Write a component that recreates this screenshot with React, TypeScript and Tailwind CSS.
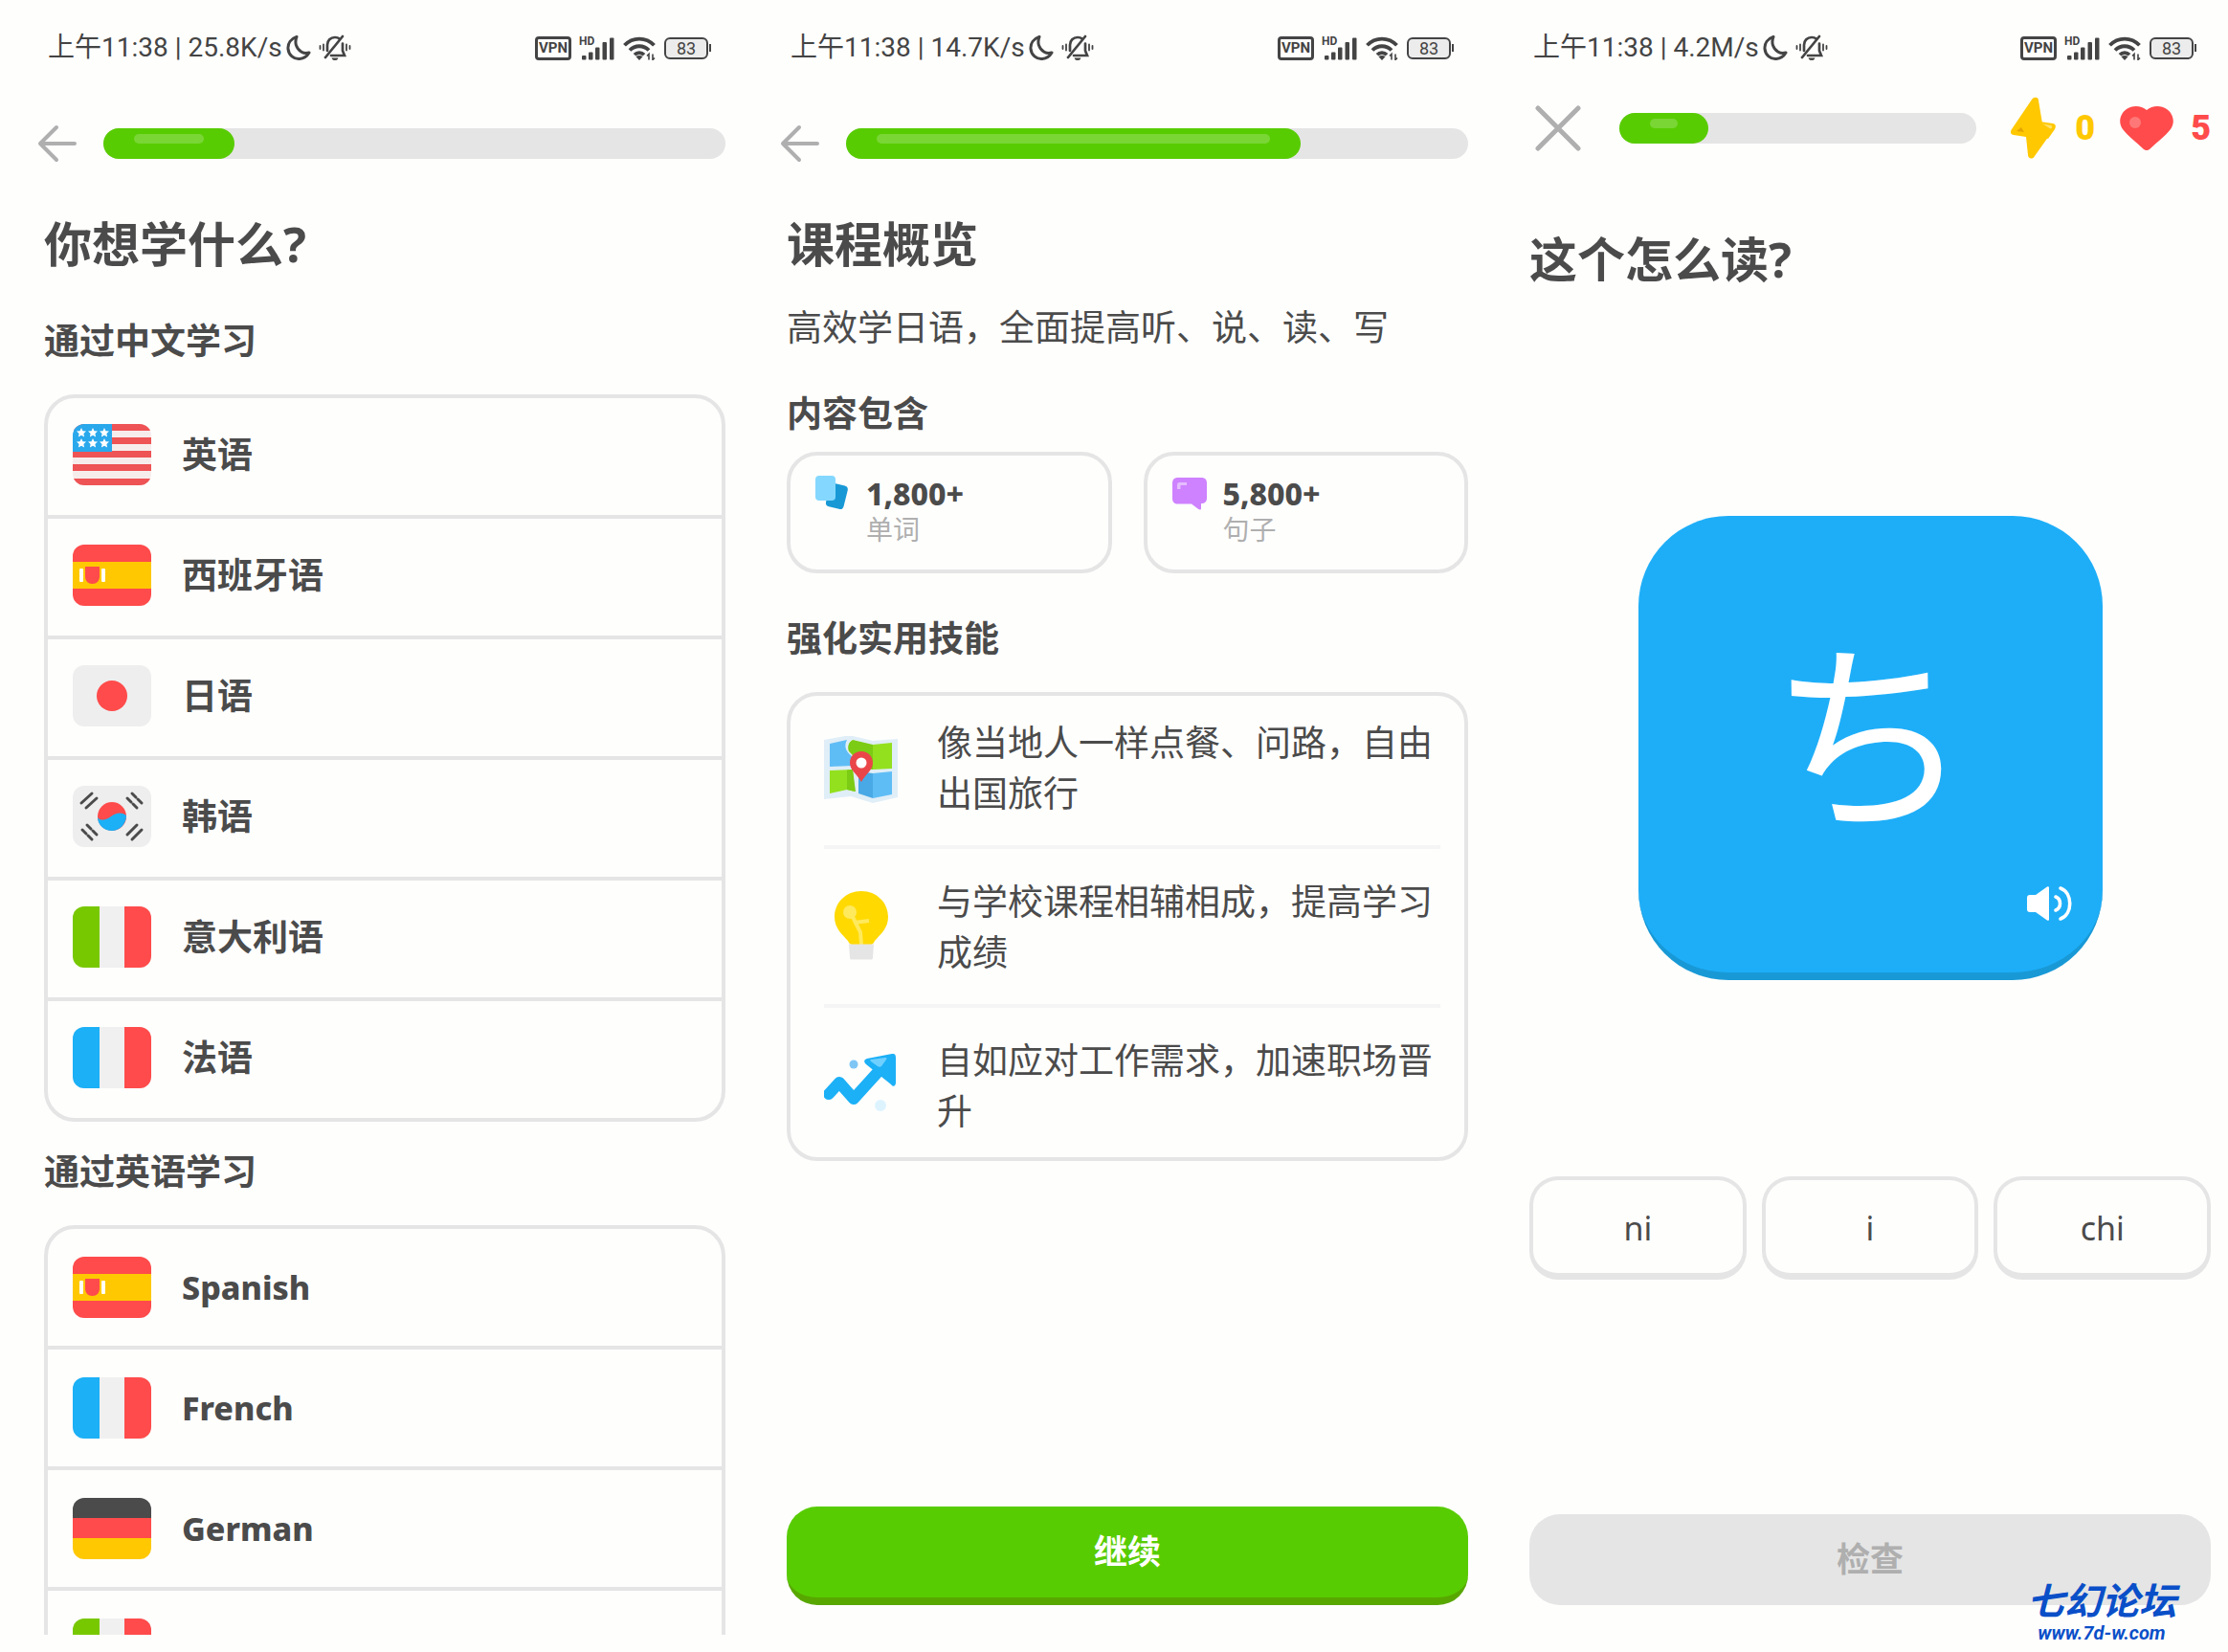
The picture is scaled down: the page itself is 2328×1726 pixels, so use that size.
import type { ReactNode } from 'react';
import clsx from 'clsx';

interface Language {
  flag: string;
  label?: string;
}

const languagesInChinese: Language[] = [
  { flag: 'us', label: '英语' },
  { flag: 'es', label: '西班牙语' },
  { flag: 'jp', label: '日语' },
  { flag: 'kr', label: '韩语' },
  { flag: 'it', label: '意大利语' },
  { flag: 'fr', label: '法语' },
];

const languagesInEnglish: Language[] = [
  { flag: 'es', label: 'Spanish' },
  { flag: 'fr', label: 'French' },
  { flag: 'de', label: 'German' },
  { flag: 'it' },
];

function Star({ x, y }: { x: number; y: number }) {
  return (
    <path
      transform={`translate(${x} ${y})`}
      d="M0 -5 L1.5 -1.7 L5 -1.4 L2.4 1 L3.1 4.6 L0 2.8 L-3.1 4.6 L-2.4 1 L-5 -1.4 L-1.5 -1.7 Z"
      fill="#fff"
    />
  );
}

function FlagArt({ code }: { code: string }) {
  switch (code) {
    case 'us':
      return (
        <>
          <rect width="82" height="64" fill="#f7ecec" />
          {[0, 14, 28, 42, 57].map((y) => (
            <rect key={y} y={y} width="82" height="7" fill="#ee5355" />
          ))}
          <rect width="41" height="29" fill="#2aa8ec" />
          {[9, 21, 33].map((x) => (
            <g key={x}>
              <Star x={x} y={9} />
              <Star x={x} y={20} />
            </g>
          ))}
        </>
      );
    case 'es':
      return (
        <>
          <rect width="82" height="64" fill="#ff4b4b" />
          <rect y="18" width="82" height="28" fill="#ffc800" />
          <rect x="7" y="25" width="4" height="14" rx="1" fill="#fff" />
          <rect x="30" y="25" width="4" height="14" rx="1" fill="#fff" />
          <path d="M13 23h15v10c0 5-3 8-7.500 8s-7.500-3-7.500-8z" fill="#ff4b4b" />
        </>
      );
    case 'jp':
      return (
        <>
          <rect width="82" height="64" fill="#eeeeee" />
          <circle cx="41" cy="32" r="16" fill="#ff4b4b" />
        </>
      );
    case 'kr':
      return (
        <>
          <rect width="82" height="64" fill="#eeeeee" />
          <circle cx="41" cy="32" r="15" fill="#ff4b4b" />
          <path d="M26 33c3 4 9 3 14-1s11-5 16-1c0 9-7 16-15 16s-15-6-15-14z" fill="#1cb0f6" />
          <g stroke="#4b4b4b" strokeWidth="3" strokeLinecap="round">
            <path d="M9 18 20 8M14 23 25 13" />
            <path d="M62 8 66 12M68 14 72 18M57 13 61 17M63 19 67 23" />
            <path d="M10 46 14 50M16 52 20 56M15 41 19 45M21 47 25 51" />
            <path d="M57 51 67 41M62 56 72 46" />
          </g>
        </>
      );
    case 'de':
      return (
        <>
          <rect width="82" height="22" fill="#4b4b4b" />
          <rect y="21" width="82" height="22" fill="#ff4b4b" />
          <rect y="42" width="82" height="22" fill="#ffc800" />
        </>
      );
    default:
      return (
        <>
          <rect width="82" height="64" fill="#f0f0f0" />
          <rect width="28" height="64" fill={code === 'it' ? '#78c800' : '#1cb0f6'} />
          <rect x="54" width="28" height="64" fill="#ff4b4b" />
        </>
      );
  }
}

function Flag({ code }: { code: string }) {
  return (
    <svg viewBox="0 0 82 64" className="h-16 w-[82px] shrink-0 rounded-xl" aria-hidden="true">
      <FlagArt code={code} />
    </svg>
  );
}

function MoonIcon() {
  return (
    <svg viewBox="0 0 26 27" className="h-7 w-[26px]" fill="none" stroke="#444" strokeWidth="3" strokeLinejoin="round">
      <path d="M11 2C5 4 1.500 9 2 14.500 2.600 21 8 25.500 14 25c4.500-.4 8-3 10-6.500-2.500.8-5.500.7-8-.8C10.500 14.500 8.500 8 11 2z" />
    </svg>
  );
}

function MutedBellIcon() {
  return (
    <svg viewBox="0 0 34 28" className="h-7 w-[34px]" fill="none" stroke="#444" strokeWidth="2.700" strokeLinecap="round">
      <path d="M9 17V11c0-4.500 3.300-8 8-8 2 0 3.500.5 4.700 1.500M25 9.500V17l2 5H13" />
      <path d="M25 2 7 24" />
      <path d="M5 10.500v6M1.500 12v3M29 10.500v6M32.500 12v3" strokeWidth="1.800" />
      <path d="M14.500 25.200h5c-.6 1.500-4.400 1.500-5 0z" fill="#444" strokeWidth="1.200" />
    </svg>
  );
}

function SignalIcon() {
  return (
    <svg viewBox="0 0 36 25" className="h-[25px] w-9 overflow-visible" fill="#444">
      <text x="-1" y="9" fontSize="12" fontWeight="700" fontFamily="Roboto, sans-serif">
        HD
      </text>
      <rect x="2" y="20" width="4.500" height="4.500" rx="1" />
      <rect x="9" y="16.500" width="4.500" height="8" rx="1" />
      <rect x="16" y="11.500" width="4.500" height="13" rx="1" />
      <rect x="23.500" y="6" width="4.500" height="18.500" rx="1" />
      <rect x="31" y="1.500" width="4.500" height="23" rx="1" />
    </svg>
  );
}

function WifiIcon() {
  return (
    <svg viewBox="0 0 34 25" className="h-[25px] w-[34px]" fill="none" stroke="#444" strokeWidth="3.800">
      <path d="M1.500 9.300C10 .3 24 .3 32.500 9.300M7 14.500c5.500-5.700 14.500-5.700 20 0M12 19.300c2.700-2.800 7.300-2.800 10 0" />
      <path d="M17 25l-3.500-3.700c2-1.700 5-1.700 7 0z" fill="#444" stroke="none" />
      <path d="M27 24.500v-6l-2 2M31 18.500v6l2-2" strokeWidth="1.600" />
    </svg>
  );
}

function StatusBar({ speed }: { speed: string }) {
  return (
    <div className="flex h-[100px] items-center justify-between pr-[15px] pl-1 text-[#444]">
      <div className="flex items-center font-[Roboto,'Noto_Sans_CJK_SC',sans-serif] text-[28px] leading-8">
        <span className="whitespace-pre">上午11:38 | {speed}</span>
        <span className="ml-1 flex gap-2">
          <MoonIcon />
          <MutedBellIcon />
        </span>
      </div>
      <div className="flex items-center gap-[9px]">
        <span className="flex h-[25px] w-[38px] items-center justify-center rounded border-[3px] border-[#444] font-[Roboto,sans-serif] text-[15px] font-bold">
          VPN
        </span>
        <SignalIcon />
        <WifiIcon />
        <span className="flex items-center gap-px">
          <span className="flex h-[23px] w-[46px] items-center justify-center rounded-md border-2 border-[#444] bg-[#ececec] font-[Roboto,sans-serif] text-[18px]">
            83
          </span>
          <span className="h-2 w-0.5 bg-[#444]" />
        </span>
      </div>
    </div>
  );
}

function ProgressBar({ percent }: { percent: number }) {
  return (
    <div
      role="progressbar"
      aria-valuenow={percent}
      aria-valuemin={0}
      aria-valuemax={100}
      className="h-8 flex-1 rounded-full bg-[#e5e5e5]"
    >
      <div className="h-full rounded-full bg-[#58cc02] px-8 pt-1.5" style={{ width: `${percent}%` }}>
        <div className="h-2.5 rounded-full bg-[#79d635]" />
      </div>
    </div>
  );
}

function BackHeader({ percent }: { percent: number }) {
  return (
    <header className="flex h-[100px] items-center">
      <button type="button" aria-label="返回" className="-ml-2 w-[70px]">
        <svg viewBox="0 0 44 40" className="h-10 w-11" fill="none" stroke="#afafaf" strokeWidth="4" strokeLinecap="round" strokeLinejoin="round">
          <path d="M40 20H4M21 3 4 20l17 17" />
        </svg>
      </button>
      <ProgressBar percent={percent} />
    </header>
  );
}

function SectionTitle({ children, className }: { children: ReactNode; className?: string }) {
  return <h2 className={clsx('text-[37px] leading-[48px] font-bold', className)}>{children}</h2>;
}

function LanguageList({ items, latin }: { items: Language[]; latin?: boolean }) {
  return (
    <ul className="shrink-0 divide-y-4 divide-[#e5e5e5] rounded-[32px] border-4 border-[#e5e5e5]">
      {items.map((item) => (
        <li key={item.flag}>
          <button
            type="button"
            aria-label={item.label ?? item.flag}
            className={clsx(
              'flex h-[122px] w-full items-center gap-8 px-[26px] text-left leading-[48px]',
              latin ? 'text-[34px] font-extrabold' : 'pb-1 text-[37px] font-bold'
            )}
          >
            <Flag code={item.flag} />
            {item.label}
          </button>
        </li>
      ))}
    </ul>
  );
}

function LanguageScreen() {
  return (
    <section className="flex h-screen flex-col pr-[18px] pl-[46px]">
      <StatusBar speed="25.8K/s" />
      <BackHeader percent={21} />
      <h1 className="mt-5 text-[50px] leading-[70px] font-bold">你想学什么?</h1>
      <div className="mb-[18px] flex min-h-0 flex-1 flex-col overflow-hidden">
        <SectionTitle className="mt-[42px]">通过中文学习</SectionTitle>
        <div className="mt-8">
          <LanguageList items={languagesInChinese} />
        </div>
        <SectionTitle className="mt-7">通过英语学习</SectionTitle>
        <div className="mt-8">
          <LanguageList items={languagesInEnglish} latin />
        </div>
      </div>
    </section>
  );
}

function CardsIcon() {
  return (
    <svg viewBox="0 0 36 36" className="h-9 w-9 shrink-0">
      <rect x="13" y="9" width="19" height="25" rx="4" transform="rotate(14 23 21)" fill="#1899d6" />
      <rect x="0" y="0" width="21" height="26" rx="4" fill="#84d8ff" />
    </svg>
  );
}

function BubbleIcon() {
  return (
    <svg viewBox="0 0 36 36" className="h-9 w-9 shrink-0">
      <path d="M6 2h24c4 0 6 2 6 6v15c0 4-2 6-6 6v5c0 2-1.500 2-3 .8L20 29.500H6c-4 0-6-2-6-6V8c0-4 2-6 6-6z" fill="#ce82ff" />
      <path d="M5 14V9.500C5 8 6 7 7.500 7H15v3H8.500v4z" fill="#e5bdff" />
    </svg>
  );
}

function StatCard({ icon, value, label }: { icon: ReactNode; value: string; label: string }) {
  return (
    <div className="flex h-[127px] flex-1 gap-[17px] rounded-[32px] border-4 border-[#e5e5e5] px-[26px] pt-[21px]">
      {icon}
      <div>
        <div className="text-[32px] leading-[38px] font-extrabold">{value}</div>
        <div className="text-[28px] leading-9 text-[#afafaf]">{label}</div>
      </div>
    </div>
  );
}

function MapIcon() {
  return (
    <svg viewBox="0 0 78 74" className="h-[74px] w-[78px]">
      <path d="M0 8 22 4 30 4 51 9 77 7V68L51 74 28 67 0 70z" fill="#e0eef7" />
      <path d="M6 12 24 8c-4 8 0 13 6 18v9L6 36z" fill="#5fbdf6" />
      <path d="M26 20c-2-5 0-10 4-12L51 13V39L34 37C34 28 30 24 26 20z" fill="#7ccb14" />
      <path d="M51 13 71 11V38L51 39z" fill="#93e01f" />
      <path d="M6 40 30 39 32 62 24 60 6 64z" fill="#93e01f" />
      <path d="M24 39.500 30 39 33 62 24 60z" fill="#7ccb14" />
      <path d="M36 41 51 43V69L36 64z" fill="#49a9e6" />
      <path d="M51 43 71 41V65L51 69z" fill="#5fbdf6" />
      <path d="M39 20c-7 0-12 5-12 12 0 8 8 12 12 20 4-8 12-12 12-20 0-7-5-12-12-12z" fill="#ea4649" />
      <circle cx="39" cy="32" r="5.500" fill="#fff" />
    </svg>
  );
}

function BulbIcon() {
  return (
    <svg viewBox="0 0 78 74" className="h-[74px] w-[78px]">
      <path d="M39 0C23 0 11 12 11 27c0 12 8 18 14 25 1 2 2 4 5 4h18c3 0 4-2 5-4 6-7 14-13 14-25C67 12 55 0 39 0z" fill="#ffd900" />
      <circle cx="27" cy="22" r="7" fill="#ffe95c" />
      <path d="M29 25 38 43 39 56M31 33 47 31" fill="none" stroke="#ffe95c" strokeWidth="4" />
      <path d="M26 55.500h26l-1 14c0 2-1 2-2 2H29c-1 0-2 0-2-2z" fill="#e5e5e5" />
    </svg>
  );
}

function TrendIcon() {
  return (
    <svg viewBox="0 0 78 74" className="h-[74px] w-[78px]">
      <path d="M5 46 16 34 31 51 60 19" fill="none" stroke="#1cb0f6" strokeWidth="12" strokeLinecap="round" strokeLinejoin="round" />
      <path d="M45 9 71 4c3-.6 4 1 4 4v26c0 4-3 5-5 2L44 15c-3-3-2-5 1-6z" fill="#1cb0f6" />
      <path d="M49 10 64 8c2 0 2 1 1 2l-5 7c-1 1-3 1-4 0l-7-5c-1-1-1-2 0-2z" fill="#6fd0ff" />
      <circle cx="31" cy="15" r="4.500" fill="#7fc6f5" />
      <circle cx="59" cy="58" r="6" fill="#ddf4ff" />
    </svg>
  );
}

const skills = [
  { icon: <MapIcon />, text: '像当地人一样点餐、问路，自由出国旅行' },
  { icon: <BulbIcon />, text: '与学校课程相辅相成，提高学习成绩' },
  { icon: <TrendIcon />, text: '自如应对工作需求，加速职场晋升' },
];

function OverviewScreen() {
  return (
    <section className="flex h-screen flex-col pr-[18px] pl-[46px]">
      <StatusBar speed="14.7K/s" />
      <BackHeader percent={73} />
      <h1 className="mt-5 text-[50px] leading-[70px] font-bold">课程概览</h1>
      <p className="mt-7 text-[37px] leading-[48px]">高效学日语，全面提高听、说、读、写</p>
      <SectionTitle className="mt-[42px]">内容包含</SectionTitle>
      <div className="mt-4 flex gap-[33px]">
        <StatCard icon={<CardsIcon />} value="1,800+" label="单词" />
        <StatCard icon={<BubbleIcon />} value="5,800+" label="句子" />
      </div>
      <SectionTitle className="mt-11">强化实用技能</SectionTitle>
      <ul className="mt-8 divide-y-4 divide-[#f5f5f5] rounded-[32px] border-4 border-[#e5e5e5] pr-[25px] pl-[35px]">
        {skills.map((skill) => (
          <li key={skill.text} className="flex items-center gap-10 py-7 first:pt-[22px] last:pb-[22px]">
            <span className="shrink-0">{skill.icon}</span>
            <p className="text-[37px] leading-[53px]">{skill.text}</p>
          </li>
        ))}
      </ul>
      <button
        type="button"
        className="mt-auto mb-[49px] h-[103px] rounded-[32px] border-b-8 border-[#58a700] bg-[#58cc02] text-[35px] font-bold text-white"
      >
        继续
      </button>
    </section>
  );
}

function BoltIcon() {
  return (
    <svg viewBox="0 0 48 66" className="h-[66px] w-12">
      <path d="M31 26 45 28c3 .5 3.500 3 2 6L40 44 30 40z" fill="#ffc800" />
      <path d="M32 28 43 30c1.500.3 1.500 2 .5 3L40 35z" fill="#ffe16b" />
      <path d="M23 3c2-3 7-3 7 1l4 24 9 6c1.500 1 1.500 2 .8 3L26 62c-2 4-7 3-7-1L17 42 4 40c-3-.5-4-3-2-6z" fill="#ffc800" />
      <path d="M7 36 12 32 15 37z" fill="#e5a500" />
    </svg>
  );
}

function HeartIcon() {
  return (
    <svg viewBox="0 0 56 46" className="h-[46px] w-14">
      <path d="M28 4C22-1 13-1 7 3c-7 5-9 14-4 21 6 8 14 13 22 21 2 1.500 4 1.500 6 0 8-8 16-13 22-21 5-7 3-16-4-21C43-1 34-1 28 4z" fill="#ff4b4b" />
      <circle cx="16" cy="17" r="6" fill="#ff7878" />
    </svg>
  );
}

function SpeakerIcon() {
  return (
    <svg viewBox="0 0 47 38" className="h-[38px] w-[47px]" fill="none" stroke="#fff" strokeWidth="3.600" strokeLinecap="round">
      <path d="M3 10h6L21 1.500c1.200-.8 2 0 2 1v33c0 1-.8 1.800-2 1L9 28H3c-2 0-3-1-3-3V13c0-2 1-3 3-3z" fill="#fff" stroke="none" />
      <path d="M30 12c6 2.500 6 11.500 0 14M35 3c13 5 13 27 0 32" />
    </svg>
  );
}

function LessonScreen() {
  return (
    <section className="relative flex h-screen flex-col pr-[18px] pl-[46px]">
      <StatusBar speed="4.2M/s" />
      <header className="flex h-[68px] items-center font-[Roboto,sans-serif] text-[36px] font-black">
        <button type="button" aria-label="关闭" className="w-[94px] pl-1.5">
          <svg viewBox="0 0 48 48" className="size-12" fill="none" stroke="#afafaf" strokeWidth="5" strokeLinecap="round">
            <path d="M3 3 45 45M45 3 3 45" />
          </svg>
        </button>
        <ProgressBar percent={25} />
        <div className="ml-[35px] flex items-center gap-5 text-[#ffc800]">
          <BoltIcon />
          0
        </div>
        <div className="ml-[26px] flex items-center gap-[18px] text-[#ff4b4b]">
          <HeartIcon />
          5
        </div>
      </header>
      <h1 className="mt-[68px] text-[50px] leading-[70px] font-bold">这个怎么读?</h1>
      <button
        type="button"
        aria-label="播放 ち"
        className="relative mt-[233px] flex size-[485px] items-center justify-center self-center rounded-[94px] border-b-8 border-[#1899d6] bg-[#1eaef8] pb-10 text-[212px] leading-none text-white"
      >
        <span lang="ja" className="font-['Noto_Sans_CJK_JP',sans-serif]">ち</span>
        <span className="absolute right-8 bottom-[53px]">
          <SpeakerIcon />
        </span>
      </button>
      <div className="mt-[205px] flex gap-4">
        {['ni', 'i', 'chi'].map((option) => (
          <button
            key={option}
            type="button"
            className="h-[108px] flex-1 rounded-[30px] border-4 border-b-[7px] border-[#e5e5e5] pt-1 text-[34px]"
          >
            {option}
          </button>
        ))}
      </div>
      <button type="button" disabled className="mt-auto mb-[49px] h-[95px] rounded-[32px] bg-[#e5e5e5] text-[35px] font-bold text-[#afafaf]">
        检查
      </button>
      <a
        href="#"
        className="absolute right-[54px] bottom-2 flex flex-col items-center font-bold text-[#0a4fc8] italic"
      >
        <span className="text-[39px] leading-[44px]">七幻论坛</span>
        <span className="font-[Roboto,sans-serif] text-[20px] leading-6">www.7d-w.com</span>
      </a>
    </section>
  );
}

export default function App() {
  return (
    <main className="grid min-h-screen grid-cols-3 bg-[#fefefd] font-['Noto_Sans','Noto_Sans_CJK_SC',sans-serif] text-[#4b4b4b]">
      <LanguageScreen />
      <OverviewScreen />
      <LessonScreen />
    </main>
  );
}
